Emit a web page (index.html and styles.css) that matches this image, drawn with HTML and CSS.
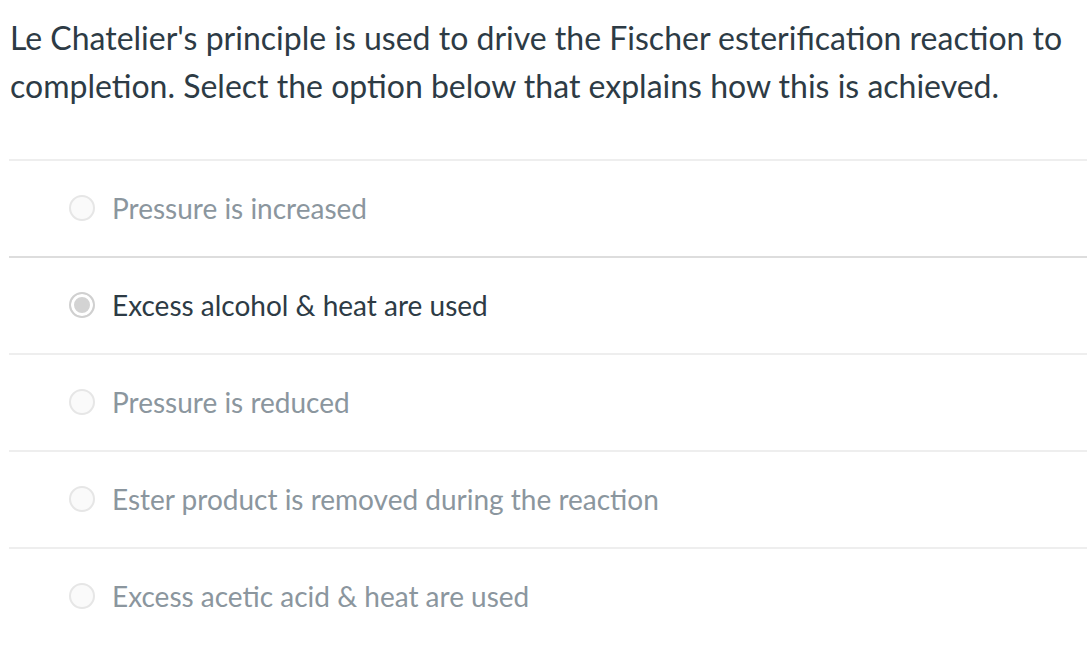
FILE: index.html
```html
<!DOCTYPE html>
<html>
<head>
<meta charset="utf-8">
<link rel="stylesheet" href="styles.css">
</head>
<body>
<div class="quiz">
  <p class="question">Le Chatelier's principle is used to drive the Fischer esterification reaction to completion. Select the option below that explains how this is achieved.</p>
  <div class="answers">
    <div class="answer"><span class="radio"></span><span class="label">Pressure is increased</span></div>
    <div class="answer selected"><span class="radio"></span><span class="label">Excess alcohol &amp; heat are used</span></div>
    <div class="answer"><span class="radio"></span><span class="label">Pressure is reduced</span></div>
    <div class="answer"><span class="radio"></span><span class="label">Ester product is removed during the reaction</span></div>
    <div class="answer"><span class="radio"></span><span class="label">Excess acetic acid &amp; heat are used</span></div>
  </div>
</div>
</body>
</html>
```
FILE: styles.css
```css
html, body {
  margin: 0;
  padding: 0;
  background: #ffffff;
}
body {
  font-family: Lato, "Open Sans", sans-serif;
  color: #2d3b45;
}
.quiz {
  padding: 14px 0 0 9px;
}
.question {
  margin: 0 0 0 1px;
  font-size: 32px;
  line-height: 48px;
  color: #2d3b45;
  height: 145px;
}
.answers {
  border-top: 2px solid #eeeeee;
}
.answer {
  height: 95px;
  border-bottom: 2px solid #eeeeee;
  display: flex;
  align-items: center;
  padding-left: 60px;
}
.answer:first-child {
  border-bottom-color: #dddddd;
}
.answer:last-child {
  border-bottom: 0;
}
.radio {
  width: 22px;
  height: 22px;
  border-radius: 50%;
  border: 2px solid #e6e6e6;
  background: #fafafa;
  flex: none;
  margin-top: -2px;
}
.selected .radio {
  border-color: #d0d0d0;
  background: #d3d3d3;
  box-shadow: inset 0 0 0 3px #ffffff;
}
.label {
  margin-left: 17px;
  font-size: 28px;
  color: #8b969e;
  margin-top: -2px;
}
.selected .label {
  color: #2d3b45;
}
```
